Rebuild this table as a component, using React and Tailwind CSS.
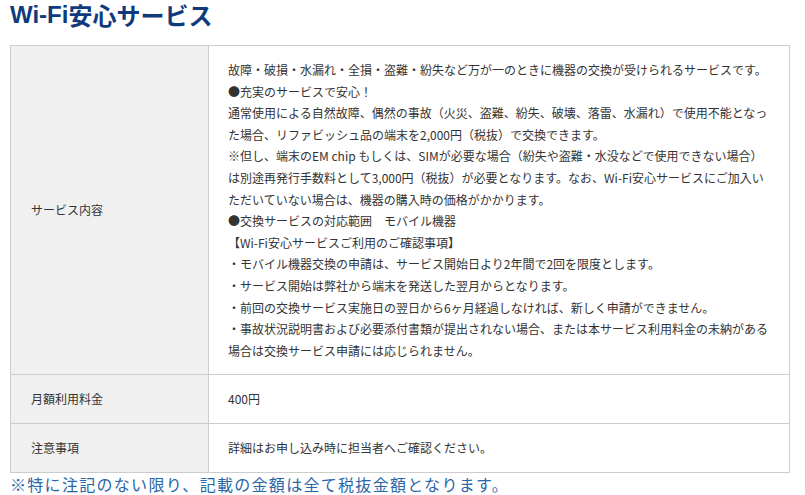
const serviceLines = [
  '故障・破損・水漏れ・全損・盗難・紛失など万が一のときに機器の交換が受けられるサービスです。',
  '●充実のサービスで安心！',
  '通常使用による自然故障、偶然の事故（火災、盗難、紛失、破壊、落雷、水漏れ）で使用不能となっ',
  'た場合、リファビッシュ品の端末を2,000円（税抜）で交換できます。',
  '※但し、端末のEM chip もしくは、SIMが必要な場合（紛失や盗難・水没などで使用できない場合）',
  'は別途再発行手数料として3,000円（税抜）が必要となります。なお、Wi-Fi安心サービスにご加入い',
  'ただいていない場合は、機器の購入時の価格がかかります。',
  '●交換サービスの対応範囲　モバイル機器',
  '【Wi-Fi安心サービスご利用のご確認事項】',
  '・モバイル機器交換の申請は、サービス開始日より2年間で2回を限度とします。',
  '・サービス開始は弊社から端末を発送した翌月からとなります。',
  '・前回の交換サービス実施日の翌日から6ヶ月経過しなければ、新しく申請ができません。',
  '・事故状況説明書および必要添付書類が提出されない場合、または本サービス利用料金の未納がある',
  '場合は交換サービス申請には応じられません。',
];

const rows = [
  { label: 'サービス内容', lines: serviceLines },
  { label: '月額利用料金', lines: ['400円'] },
  { label: '注意事項', lines: ['詳細はお申し込み時に担当者へご確認ください。'] },
];

const font = { fontFamily: '"Noto Sans CJK JP", "Noto Sans", sans-serif' };

export default function App() {
  return (
    <div className="w-[805px] h-[495px] bg-white pl-[10px] text-[#333]" style={font}>
      <h1 className="flex items-center h-[30px] mb-[15px] text-[24px] leading-[30px] font-bold text-[#0f3b7c]">
        <span className="font-['Liberation_Sans',sans-serif]">Wi-Fi</span>
        <span>安心サービス</span>
      </h1>
      <table className="w-[780px] border-collapse text-[12px] leading-[21.6px]">
        <tbody>
          {rows.map((row) => (
            <tr key={row.label}>
              <td className="w-[198px] bg-[#f0f0f0] border border-[#cccccc] px-[20px] py-[13px] align-middle">
                {row.label}
              </td>
              <td className="border border-[#cccccc] px-[19px] py-[13px] align-middle">
                {row.lines.map((line, i) => (
                  <div key={i} className="whitespace-nowrap">{line}</div>
                ))}
              </td>
            </tr>
          ))}
        </tbody>
      </table>
      <p className="text-[16px] leading-[22px] tracking-[1.3px] text-[#2a66a8]">
        ※特に注記のない限り、記載の金額は全て税抜金額となります。
      </p>
    </div>
  );
}
